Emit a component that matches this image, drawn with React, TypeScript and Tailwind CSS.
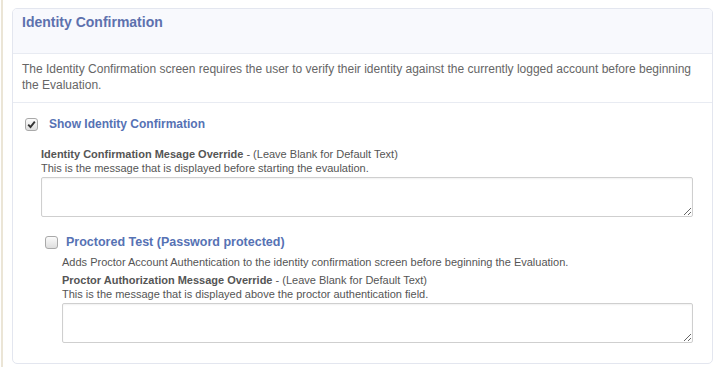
import React from "react";

const Box = ({ checked, className }: { checked?: boolean; className?: string }) => (
  <span
    className={`inline-flex h-[13px] w-[13px] shrink-0 items-center justify-center rounded-[3px] border border-[#a9a9a9] bg-gradient-to-b from-[#fbfbfb] to-[#dedede] ${className ?? ""}`}
  >
    {checked && (
      <svg width="9" height="9" viewBox="0 0 9 9">
        <path d="M1.2 4.6 L3.5 7 L7.8 1.6" fill="none" stroke="#333" strokeWidth="1.9" />
      </svg>
    )}
  </span>
);

const Field = ({ title, hint }: { title: string; hint: string }) => (
  <div>
    <div className="text-[11px] leading-[14px] text-[#555]">
      <span className="font-bold">{title}</span> - (Leave Blank for Default Text)
    </div>
    <div className="text-[11px] leading-[14px] text-[#555]">{hint}</div>
    <textarea className="mt-[2px] block h-[40px] w-full resize-y rounded-[2px] border border-[#cfcfcf] bg-white shadow-[inset_0_1px_2px_rgba(0,0,0,0.06)] outline-none" />
  </div>
);

export default function App() {
  return (
    <div
      className="flex h-[367px] w-[728px] bg-white"
      style={{ fontFamily: '"Liberation Sans", Arial, sans-serif' }}
    >
      <div className="ml-px w-[2px] bg-[#ebe5d6]" />
      <div className="ml-[9px] mt-[8px] h-[356px] w-[701px] overflow-hidden rounded-[5px] border border-[#e3e6ef]">
        <div className="h-[45px] border-b border-[#e8ebf2] bg-[#f8f9fd] px-[9px] pt-[3px]">
          <h2 className="text-[14px] font-bold leading-[20px] text-[#5d71ae]">Identity Confirmation</h2>
        </div>
        <div className="border-b border-[#e8ebf2] px-[9px] pb-[9px] pt-[7px] text-[12px] leading-[16px] text-[#666]">
          The Identity Confirmation screen requires the user to verify their identity against the currently logged account before beginning the Evaluation.
        </div>
        <div className="pl-[12px] pr-[19px] pt-[13px]">
          <div className="flex items-center">
            <Box checked />
            <span className="ml-[11px] text-[12px] font-bold leading-[17px] text-[#5672b4]">Show Identity Confirmation</span>
          </div>
          <div className="ml-[16px] mt-[14px]">
            <Field title="Identity Confirmation Mesage Override" hint="This is the message that is displayed before starting the evaulation." />
            <div className="mt-[16px] flex items-center pl-[4px]">
              <Box />
              <span className="ml-[8px] text-[12.5px] font-bold leading-[18px] text-[#5672b4]">Proctored Test (Password protected)</span>
            </div>
            <div className="ml-[21px] mt-[4px]">
              <div className="text-[11px] leading-[15px] text-[#555]">
                Adds Proctor Account Authentication to the identity confirmation screen before beginning the Evaluation.
              </div>
              <div className="mt-[3px]">
                <Field title="Proctor Authorization Message Override" hint="This is the message that is displayed above the proctor authentication field." />
              </div>
            </div>
          </div>
        </div>
      </div>
    </div>
  );
}
